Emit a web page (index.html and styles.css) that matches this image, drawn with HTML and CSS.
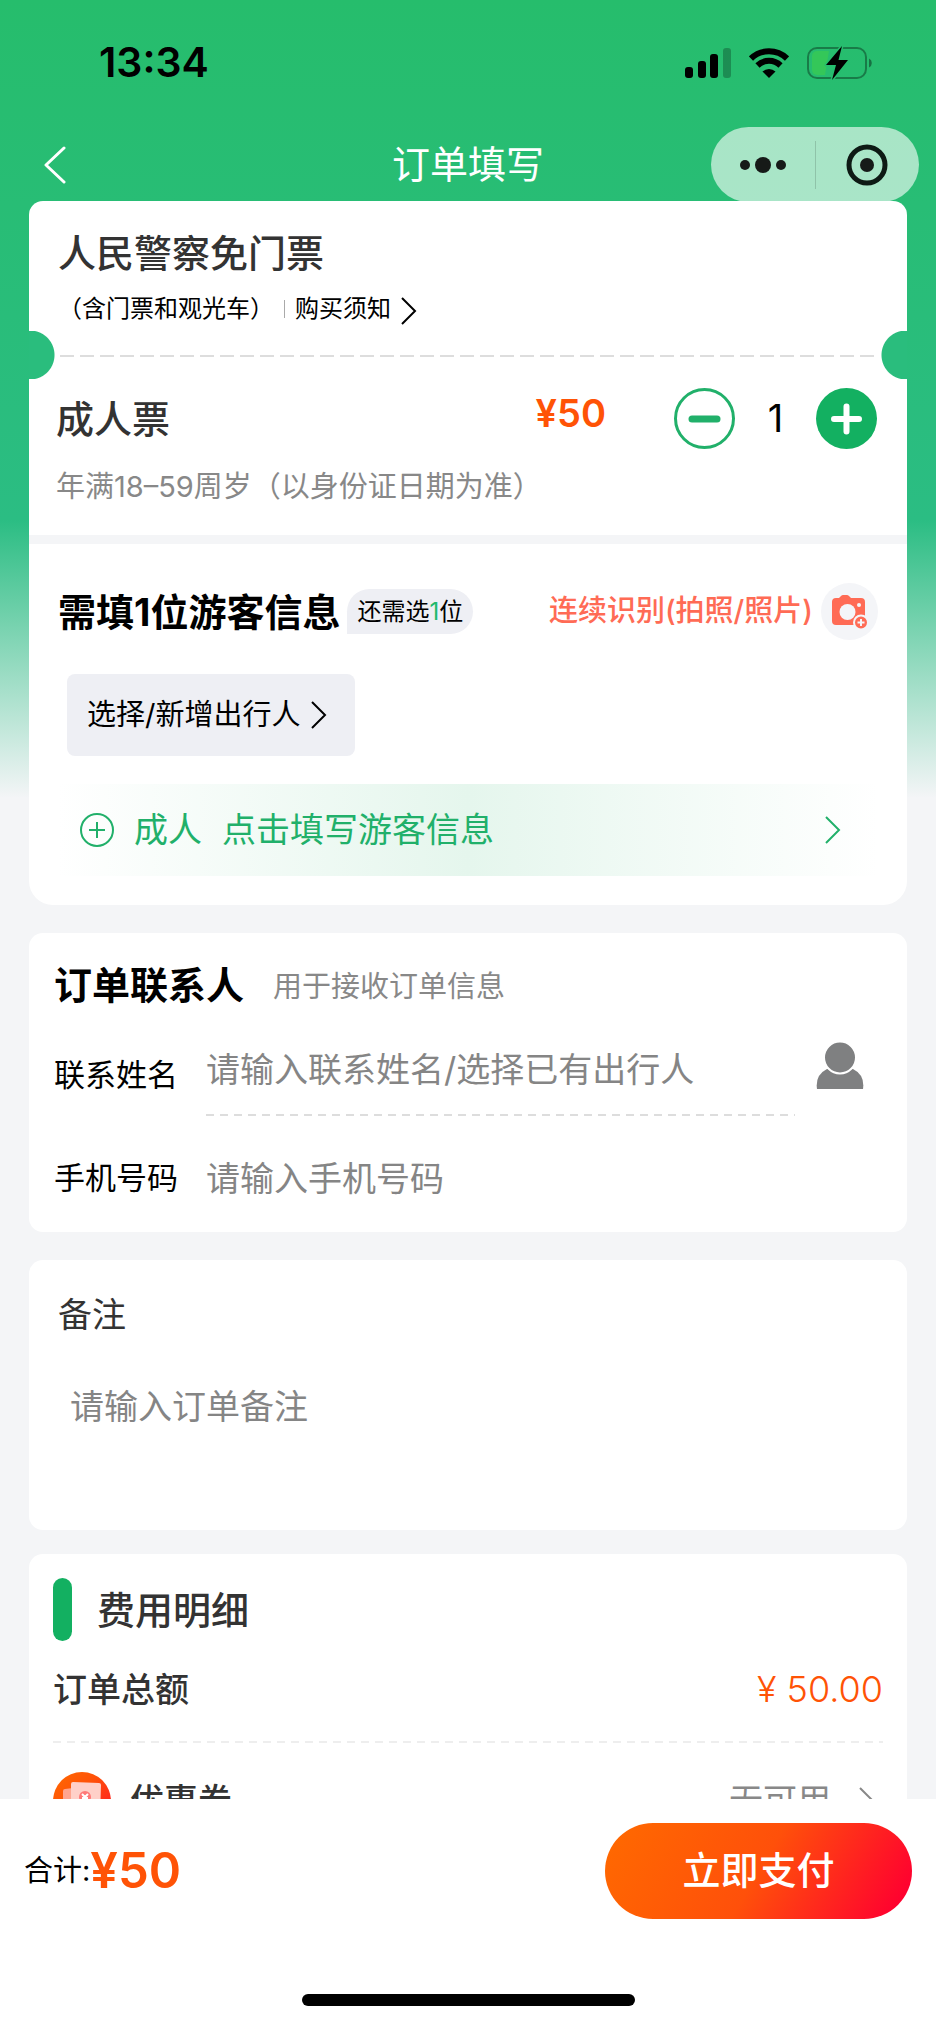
FILE: index.html
```html
<!DOCTYPE html>
<html lang="zh-CN">
<head>
  <meta charset="UTF-8" />
  <title>订单填写</title>
  <meta name="viewport" content="width=device-width, initial-scale=1" />
  <link rel="stylesheet" href="styles.css">
</head>
<body>

  <header>
    <div class="status-bar">
      <span class="time">13:34</span>
      <div class="status-icons">
        <svg width="46" height="30" viewBox="0 0 46 30">
          <rect x="0" y="19" width="8" height="11" rx="3" />
          <rect x="13" y="13" width="8" height="17" rx="3" />
          <rect x="25" y="6" width="8" height="24" rx="3" />
          <rect x="38" y="0" width="8" height="30" rx="3" opacity="0.25" />
        </svg>
        <svg width="40" height="30" viewBox="0 0 40 30">
          <g fill="none" stroke="#000" stroke-width="6">
            <path d="M2 10.500a26 26 0 0 1 36 0" />
            <path d="M8.500 17.500a16.500 16.500 0 0 1 23 0" />
          </g>
          <path d="M20 30l-6.500-6.500a9.500 9.500 0 0 1 13 0z" />
        </svg>
        <svg width="66" height="34" viewBox="0 0 66 34">
          <rect x="1" y="2" width="58" height="30" rx="9" fill="none" stroke="#000" stroke-opacity="0.35" stroke-width="2" />
          <path d="M10 5h12l-4 24h-8a5 5 0 0 1-5-5v-14a5 5 0 0 1 5-5z" fill="#34c759" />
          <path d="M62 12.500a5 5 0 0 1 0 9z" fill-opacity="0.4" />
          <path d="M35 0L19 19h10l-4 15L41 14H31.500z" stroke="#26bd6e" stroke-width="3" paint-order="stroke" stroke-linejoin="round" />
        </svg>
      </div>
    </div>

    <nav>
      <a class="back" href="#" aria-label="返回">
        <svg width="22" height="38" viewBox="0 0 22 38"><path d="M20 2L2 19l18 17" fill="none" stroke="#fff" stroke-width="3" stroke-linecap="round" stroke-linejoin="round" /></svg>
      </a>
      <h1>订单填写</h1>
      <div class="capsule">
        <button type="button" aria-label="更多">
          <svg width="46" height="18" viewBox="0 0 46 18"><circle cx="5" cy="9" r="5" /><circle cx="23" cy="9" r="8" /><circle cx="41" cy="9" r="5" /></svg>
        </button>
        <button type="button" aria-label="关闭">
          <svg width="42" height="42" viewBox="0 0 42 42"><circle cx="21" cy="21" r="18" fill="none" stroke="#0d1a14" stroke-width="5" /><circle cx="21" cy="21" r="7" /></svg>
        </button>
      </div>
    </nav>
  </header>

  <main>
    <section class="card ticket">
      <div class="ticket-head">
        <h2>人民警察免门票</h2>
        <p class="notice">
          <span>（含门票和观光车）</span>
          <a href="#">购买须知 <svg class="arrow" width="16" height="28" viewBox="0 0 16 28"><path d="M1 1l13 13L1 27" /></svg></a>
        </p>
      </div>

      <div class="tear"></div>

      <div class="ticket-type">
        <div class="type-row">
          <h2>成人票</h2>
          <span class="price">¥50</span>
          <div class="stepper">
            <button type="button" class="minus" aria-label="减少">
              <svg width="61" height="61" viewBox="0 0 61 61"><circle cx="30.500" cy="30.500" r="29" fill="#fff" stroke="#21b06a" stroke-width="3" /><path d="M18 31h25" stroke="#21b06a" stroke-width="7" stroke-linecap="round" /></svg>
            </button>
            <input type="text" id="count" value="1" aria-label="数量" readonly>
            <button type="button" class="plus" aria-label="增加">
              <svg width="61" height="61" viewBox="0 0 61 61"><circle cx="30.500" cy="30.500" r="30.500" fill="#13b061" /><path d="M18 31h25M30.500 18.500v25" stroke="#fff" stroke-width="6" stroke-linecap="round" /></svg>
            </button>
          </div>
        </div>
        <p class="desc">年满18–59周岁（以身份证日期为准）</p>
      </div>

      <div class="visitors">
        <div class="visitors-head">
          <h2>需填1位游客信息</h2>
          <span class="badge">还需选<b>1</b>位</span>
          <a class="scan" href="#">
            连续识别(拍照/照片)
            <svg width="57" height="57" viewBox="0 0 57 57">
              <circle cx="28.500" cy="28.500" r="28.500" fill="#f4f5f8" />
              <path d="M15 15h3l2-2q1-1 2-1h4q1 0 2 1l2 2h10q4 0 4 4v19q0 4-4 4H15q-4 0-4-4V19q0-4 4-4z" fill="#ff6b55" />
              <circle cx="26.500" cy="29" r="8" fill="#f4f5f8" />
              <circle cx="38" cy="22" r="2" fill="#f4f5f8" />
              <circle cx="40" cy="39.500" r="7" fill="#ff6b55" stroke="#f4f5f8" stroke-width="2" />
              <path d="M36.500 39.500h7M40 36v7" stroke="#f4f5f8" stroke-width="2" />
            </svg>
          </a>
        </div>
        <button type="button" class="choose">选择/新增出行人 <svg class="arrow" width="16" height="28" viewBox="0 0 16 28"><path d="M1 1l13 13L1 27" /></svg></button>
        <a class="fill-in" href="#">
          <svg width="34" height="34" viewBox="0 0 34 34"><g fill="none" stroke="#21b06a" stroke-width="2"><circle cx="17" cy="17" r="16" /><path d="M9 17h16M17 9v16" /></g></svg>
          <span>成人</span>
          <span>点击填写游客信息</span>
          <svg class="arrow" width="16" height="28" viewBox="0 0 16 28"><path d="M1 1l13 13L1 27" /></svg>
        </a>
      </div>
    </section>

    <section class="card contact">
      <div class="contact-head">
        <h2>订单联系人</h2>
        <p>用于接收订单信息</p>
      </div>
      <div class="field underlined">
        <label for="name">联系姓名</label>
        <input type="text" id="name" placeholder="请输入联系姓名/选择已有出行人">
        <button type="button" aria-label="选择联系人">
          <svg width="48" height="48" viewBox="0 0 48 48"><path d="M1 47q-2-14 10-20h26q12 6 10 20z" fill="#7f8081" /><circle cx="24" cy="15.500" r="16" fill="#7f8081" stroke="#fff" stroke-width="2" /></svg>
        </button>
      </div>
      <div class="field">
        <label for="phone">手机号码</label>
        <input type="tel" id="phone" placeholder="请输入手机号码">
      </div>
    </section>

    <section class="card remark">
      <label for="remark">备注</label>
      <textarea id="remark" placeholder="请输入订单备注"></textarea>
    </section>

    <section class="card fees">
      <h2>费用明细</h2>
      <div class="fee-row total">
        <h3>订单总额</h3>
        <span class="amount">¥ 50.00</span>
      </div>
      <div class="fee-row coupon">
        <svg width="58" height="58" viewBox="0 0 58 58">
          <defs>
            <linearGradient id="couponFill" x1="0" y1="0" x2="1" y2="1">
              <stop offset="0" stop-color="#ff6a00" />
              <stop offset="0.4" stop-color="#ff5208" />
              <stop offset="1" stop-color="#ff0a2a" />
            </linearGradient>
          </defs>
          <circle cx="29" cy="29" r="29" fill="url(#couponFill)" />
          <path d="M10 19q0-2 2-2l8-1v28h-8q-2 0-2-2z" fill="#ffa58f" />
          <path d="M18 12q0-2 2-2l26 1q2 0 2 2l-1 30q0 2-2 2H20q-2 0-2-2z" fill="#ffd0c8" />
          <circle cx="32" cy="25" r="6" fill="#ff7a78" />
          <path d="M29 22l3 3 3-3M32 25v5M29 26h6" fill="none" stroke="#fff" stroke-width="2" />
        </svg>
        <h3>优惠券</h3>
        <a href="#">无可用 <svg class="arrow" width="16" height="28" viewBox="0 0 16 28"><path d="M1 1l13 13L1 27" /></svg></a>
      </div>
    </section>
  </main>

  <footer>
    <div class="pay-bar">
      <p>合计:<strong>¥50</strong></p>
      <button type="button">立即支付</button>
    </div>
    <div class="home-indicator"></div>
  </footer>

</body>
</html>
```

FILE: styles.css
```css
* {
  box-sizing: border-box;
}

body {
  font-family: 'Inter', 'Noto Sans CJK SC', sans-serif;
  line-height: 1.2;
  background: linear-gradient(#26bd6c 0, #2bbd83 520px, #f4f5f7 798px);
  margin: 0;
  height: 100vh;
  display: flex;
  flex-direction: column;
  color: #000;
}

h1,
h2,
h3,
p {
  margin: 0;
}

h2 {
  font-size: 38px;
  line-height: 48px;
  font-weight: 500;
  color: #333;
}

h3 {
  font-size: 34px;
  line-height: 44px;
  font-weight: 500;
  color: #333;
}

a {
  color: inherit;
  text-decoration: none;
}

button,
input,
textarea {
  font-family: inherit;
  line-height: inherit;
  padding: 0;
  border: none;
  background: none;
  outline: none;
}

button {
  color: inherit;
  cursor: pointer;
}

svg {
  display: block;
  flex-shrink: 0;
}

.arrow path {
  fill: none;
  stroke: currentColor;
  stroke-width: 2;
}

/* top bars */
.status-bar {
  height: 125px;
  padding: 0 63px 0 99px;
  display: flex;
  align-items: center;
  justify-content: space-between;
}

.time {
  font-size: 41px;
  font-weight: 600;
}

.status-icons {
  display: flex;
  align-items: center;
  gap: 18px;
}

nav {
  height: 76px;
  padding: 2px 17px 0 44px;
  display: grid;
  grid-template-columns: 1fr auto 1fr;
  align-items: center;
}

.back {
  width: 22px;
}

nav h1 {
  margin-right: 27px;
  font-size: 38px;
  font-weight: 400;
  color: #fff;
}

.capsule {
  justify-self: end;
  width: 208px;
  height: 75px;
  border-radius: 38px;
  background: rgba(255, 255, 255, 0.6);
  display: flex;
  align-items: center;
}

.capsule button {
  flex: 1;
  height: 48px;
  display: flex;
  align-items: center;
  justify-content: center;
}

.capsule button + button {
  border-left: 1px solid rgba(0, 0, 0, 0.15);
}

.capsule svg {
  fill: #161a18;
}

main {
  flex: 1;
  min-height: 0;
  overflow-y: auto;
  scrollbar-width: none;
  padding: 0 29px;
}

.card {
  background: #fff;
  border-radius: 14px;
  margin-bottom: 28px;
}

/* ticket */
.ticket {
  border-radius: 14px 14px 24px 24px;
}

.ticket-head {
  padding: 28px 29px 6px;
}

.notice {
  margin-top: 16px;
  font-size: 24px;
  line-height: 32px;
  display: flex;
  align-items: center;
}

.notice a {
  display: flex;
  align-items: center;
  gap: 10px;
}

.notice a::before {
  content: '';
  width: 1px;
  height: 18px;
  margin-left: 10px;
  background: #aaa;
}

.notice .arrow {
  align-self: flex-end;
}

.tear {
  position: relative;
  height: 48px;
  padding: 24px 31px 0;
}

.tear::after {
  content: '';
  display: block;
  height: 2px;
  background: repeating-linear-gradient(90deg, #ddd 0 14px, transparent 14px 20px);
}

.tear::before {
  content: '';
  position: absolute;
  top: 0;
  left: 0;
  right: 0;
  bottom: 0;
  background:
    radial-gradient(circle at 1px 24px, #2abd7d 24px, transparent 25px),
    radial-gradient(circle at calc(100% - 1px) 24px, #2abd7d 24px, transparent 25px);
}

.ticket-type {
  padding: 9px 30px 30px 27px;
  border-bottom: 9px solid #f4f5f7;
}

.type-row {
  display: flex;
  align-items: center;
}

.price {
  margin-left: auto;
  padding-bottom: 10px;
  font-size: 38px;
  font-weight: 600;
  color: #ff5306;
}

.stepper {
  margin-left: 68px;
  display: flex;
  align-items: center;
}

.stepper input {
  width: 81px;
  font-size: 38px;
  text-align: center;
}

.desc {
  margin-top: 20px;
  font-size: 29px;
  line-height: 36px;
  color: #888;
}

/* visitors */
.visitors {
  padding: 39px 29px 29px;
}

.visitors-head {
  display: flex;
  align-items: center;
}

.visitors-head h2,
.contact-head h2 {
  font-weight: 700;
  color: #000;
}

.badge {
  margin-left: 7px;
  padding: 0 10px;
  border-radius: 24px 24px 24px 0;
  background: #eeeff4;
  font-size: 24px;
  line-height: 45px;
}

.badge b {
  font-weight: 400;
  color: #21b96c;
}

.scan {
  margin-left: auto;
  display: flex;
  align-items: center;
  gap: 8px;
  font-size: 29px;
  font-weight: 500;
  color: #ff6b55;
}

.choose {
  margin: 34px 0 28px 9px;
  height: 82px;
  padding: 0 28px 0 20px;
  border-radius: 8px;
  background: #eeeff4;
  font-size: 29px;
  display: flex;
  align-items: center;
  gap: 11px;
}

.fill-in {
  height: 92px;
  padding: 0 37px 0 22px;
  background: linear-gradient(90deg, #fff, #e5f6ed 50%, #fff);
  display: flex;
  align-items: center;
  gap: 20px;
  font-size: 34px;
  color: #21b06a;
}

.fill-in .arrow {
  margin-left: auto;
}

/* contact */
.contact {
  padding: 28px 25px 18px;
}

.contact-head {
  display: flex;
  align-items: center;
  gap: 29px;
  margin-bottom: 25px;
}

.contact-head p {
  padding-top: 4px;
  font-size: 29px;
  color: #888;
}

.field {
  display: flex;
  align-items: center;
}

.field label {
  width: 152px;
  font-size: 31px;
}

.field input {
  flex: 1;
  min-width: 0;
  height: 72px;
  font-size: 34px;
}

.field button {
  align-self: flex-start;
  padding: 8px 18px 0 21px;
}

.underlined {
  margin-bottom: 26px;
}

.underlined input {
  height: 82px;
  padding-bottom: 12px;
  background: repeating-linear-gradient(90deg, #ddd 0 8px, transparent 8px 14px) bottom / 100% 2px no-repeat;
}

::placeholder {
  color: #858585;
  opacity: 1;
}

/* remark */
.remark {
  padding: 33px 29px 0;
  margin-bottom: 24px;
}

.remark label {
  display: block;
  font-size: 34px;
  line-height: 44px;
  color: #333;
}

.remark textarea {
  display: block;
  width: 100%;
  height: 193px;
  padding: 48px 12px 0;
  font-size: 34px;
  line-height: 44px;
  resize: none;
}

/* fees */
.fees {
  padding: 24px 24px 30px;
}

.fees h2 {
  display: flex;
  align-items: center;
  gap: 25px;
}

.fees h2::before {
  content: '';
  width: 19px;
  height: 63px;
  border-radius: 10px;
  background: #13b061;
}

.fee-row {
  display: flex;
  align-items: center;
}

.total {
  height: 102px;
  padding-bottom: 4px;
  justify-content: space-between;
  background: repeating-linear-gradient(90deg, #eee 0 8px, transparent 8px 14px) bottom / 100% 2px no-repeat;
}

.amount {
  font-size: 36px;
  font-weight: 300;
  color: #ff5306;
}

.coupon {
  margin-top: 29px;
  gap: 19px;
}

.coupon a {
  margin-left: auto;
  padding-right: 8px;
  display: flex;
  align-items: center;
  gap: 28px;
  font-size: 34px;
  color: #888;
}

/* bottom bar */
footer {
  background: #fff;
  padding-bottom: 19px;
}

.pay-bar {
  display: flex;
  align-items: center;
  justify-content: space-between;
  padding: 24px 24px 75px;
}

.pay-bar p {
  font-size: 29px;
  display: flex;
  align-items: center;
}

.pay-bar strong {
  font-size: 49px;
  font-weight: 600;
  color: #ff5306;
}

.pay-bar button {
  width: 307px;
  height: 96px;
  border-radius: 48px;
  background: linear-gradient(120deg, #ff6a00, #ff500a 50%, #ff0030 95%);
  font-size: 38px;
  font-weight: 500;
  color: #fff;
}

.home-indicator {
  width: 333px;
  height: 12px;
  margin: 0 auto;
  border-radius: 6px;
  background: #000;
}
```
